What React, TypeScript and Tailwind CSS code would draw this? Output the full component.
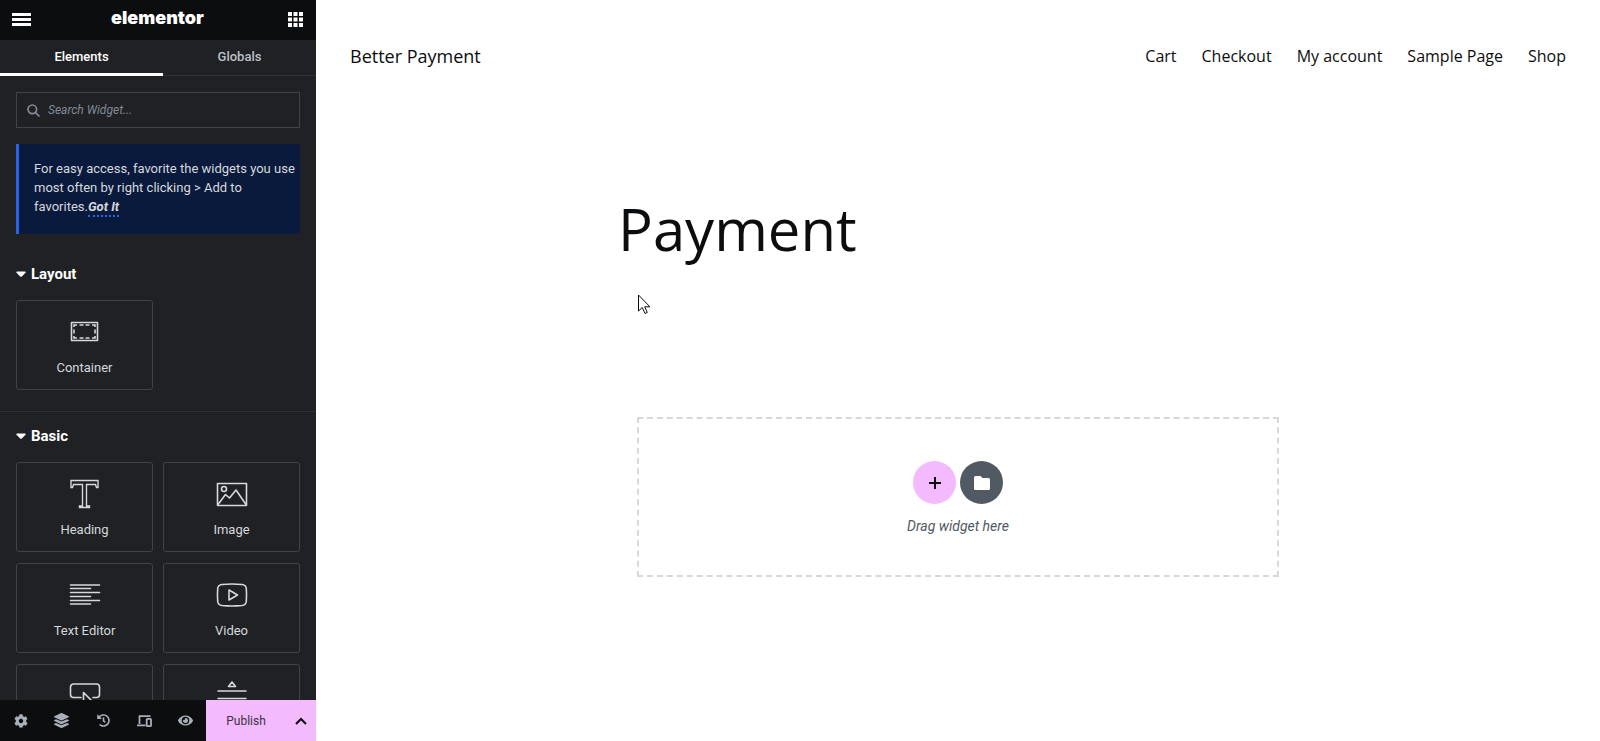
import type { ReactNode } from "react";
import { FaCog, FaEye, FaHistory, FaLayerGroup } from "react-icons/fa";

function Stroke({ children, w = 30, h = 30 }: { children: ReactNode; w?: number; h?: number }) {
  return (
    <svg
      width={w}
      height={h}
      viewBox={`0 0 ${w} ${h}`}
      fill="none"
      stroke="currentColor"
      strokeWidth="1.6"
      strokeLinecap="round"
      strokeLinejoin="round"
      aria-hidden="true"
    >
      {children}
    </svg>
  );
}

const icons: Record<string, ReactNode> = {
  container: (
    <Stroke>
      <rect x="1.5" y="5.500" width="26" height="18" />
      <path
        d="M4 10V8h3M9.500 8h4M15.500 8h4M22 8h3v2M25 12.500v4M25 19v2h-3M19.500 21h-4M13.500 21h-4M7 21H4v-2M4 16.500v-4"
        strokeLinecap="butt"
        strokeLinejoin="miter"
      />
    </Stroke>
  ),
  heading: (
    <Stroke>
      <path
        d="M1 1.500h27v7h-1.500l-1-3H16.500V27h3v1.500h-10V27h3V5.500H3.500l-1 3H1z"
        strokeWidth="1.400"
        strokeLinejoin="miter"
      />
    </Stroke>
  ),
  image: (
    <Stroke w={32}>
      <rect x="1.500" y="4.500" width="29" height="22" />
      <circle cx="8" cy="10" r="2.500" />
      <path d="M2 25.500l7.500-10 4 3.500L20 11l10 14.500" />
    </Stroke>
  ),
  text: (
    <Stroke w={32}>
      <path d="M1.500 5h29M1.500 8.500h20M1.500 12.500h29M1.500 16.500h20M1.500 20.500h29M1.500 24h20" />
    </Stroke>
  ),
  video: (
    <Stroke w={32}>
      <path d="M6 4.500Q16 3.500 26 4.500Q30 5 30.300 8.500Q30.800 15 30.300 21.500Q30 25 26 25.500Q16 26.500 6 25.500Q2 25 1.700 21.500Q1.200 15 1.700 8.500Q2 5 6 4.500z" />
      <path d="M13 10v10l8.500-5z" />
    </Stroke>
  ),
  button: (
    <Stroke w={32}>
      <path d="M12 16.500H4.500a3 3 0 0 1-3-3V6a3 3 0 0 1 3-3h23a3 3 0 0 1 3 3v7.500a3 3 0 0 1-3 3H24" />
      <path d="M14.500 11.500v13l3.500-3.500 5.500-.5z" />
    </Stroke>
  ),
  divider: (
    <Stroke w={30}>
      <path d="M15 1l3.500 4.500h-7zM1 10h28M1 17.500h28M15 26.500l3.500-4h-7z" />
    </Stroke>
  ),
};

function Card({ icon, name, labelled = true }: { icon: string; name: string; labelled?: boolean }) {
  return (
    <button
      type="button"
      aria-label={name}
      className="flex h-[90px] flex-col items-center rounded-[3px] border border-[#3f444b] pt-4 text-[13px] leading-4 text-[#d5d8dc]"
    >
      <span className="mb-[13px]">{icons[icon]}</span>
      {labelled && name}
    </button>
  );
}

function SectionHeading({ title }: { title: string }) {
  return (
    <h2>
      <button type="button" className="flex h-12 items-center gap-[5px] px-4 text-[15px] font-bold text-white">
        <svg width="10" height="6" viewBox="0 0 10 6" fill="currentColor" aria-hidden="true">
          <path d="M1 .5h8q1 .5.500 1.200L5.800 5.500q-.8.600-1.600 0L.5 1.700Q0 1 1 .5z" />
        </svg>
        {title}
      </button>
    </h2>
  );
}

function FooterButton({ label, children }: { label: string; children: ReactNode }) {
  return (
    <button type="button" aria-label={label} className="flex flex-1 items-center justify-center text-[#a9afb8]">
      {children}
    </button>
  );
}

function Panel() {
  return (
    <aside className="relative flex w-[316px] shrink-0 flex-col bg-[#1f2124] font-[Roboto,sans-serif]">
      <header className="flex h-10 shrink-0 items-center justify-between bg-[#0c0d0e] pr-[13px] pb-[2px] pl-3 text-white">
        <button type="button" aria-label="Menu">
          <svg width="19" height="13" viewBox="0 0 19 13" fill="currentColor" aria-hidden="true">
            <path d="M0 0h19v3H0zM0 5h19v3H0zM0 10h19v3H0z" />
          </svg>
        </button>
        <h1 className="pr-1 pb-[2px] font-[Inter,sans-serif] text-lg leading-5 font-black">elementor</h1>
        <button type="button" aria-label="Widgets panel">
          <svg width="15" height="15" viewBox="0 0 15 15" fill="currentColor" aria-hidden="true">
            <path d="M0 0h4v4H0zM5.500 0h4v4h-4zM11 0h4v4h-4zM0 5.500h4v4H0zM5.500 5.500h4v4h-4zM11 5.500h4v4h-4zM0 11h4v4H0zM5.500 11h4v4h-4zM11 11h4v4h-4z" />
          </svg>
        </button>
      </header>

      <nav className="flex h-9 shrink-0 text-[13px] font-medium">
        <button type="button" className="w-[163px] border-b-3 border-white text-white">
          Elements
        </button>
        <button type="button" className="flex-1 border-b border-[#2f3237] pb-[2px] text-[#bcc0c6]">
          Globals
        </button>
      </nav>

      <div className="min-h-0 flex-1 overflow-hidden">
        <label className="mx-4 mt-4 flex h-9 items-center gap-2 border border-[#3f444b] px-[10px] text-[#818a96]">
          <svg width="13" height="13" viewBox="0 0 13 13" fill="none" stroke="currentColor" strokeWidth="1.700" strokeLinecap="round" aria-hidden="true">
            <circle cx="5.300" cy="5.300" r="4.300" />
            <path d="M8.600 8.600L12 12" />
          </svg>
          <input
            type="search"
            aria-label="Search Widget"
            placeholder="Search Widget..."
            className="min-w-0 flex-1 bg-transparent text-xs italic outline-none placeholder:text-[#818a96]"
          />
        </label>

        <div className="mx-4 mt-4 h-[90px] rounded-r-[3px] border-l-3 border-[#2563eb] bg-[#0a1a3d] pt-[15px] pr-1 pl-[15px] text-[13px] leading-[19px] text-[#d5d8dc]">
          For easy access, favorite the widgets you use most often by right clicking &gt; Add to favorites.
          <a href="#got-it" className="border-b-2 border-dotted border-[#2563eb] pb-px font-bold italic">
            Got It
          </a>
        </div>

        <section className="mt-4 border-b border-[#2d3035] pb-[21px]">
          <SectionHeading title="Layout" />
          <div className="grid grid-cols-2 gap-x-[10px] gap-y-[11px] px-4 pt-[2px]">
            <Card icon="container" name="Container" />
          </div>
        </section>

        <section>
          <SectionHeading title="Basic" />
          <div className="grid grid-cols-2 gap-x-[10px] gap-y-[11px] px-4 pt-[2px]">
            <Card icon="heading" name="Heading" />
            <Card icon="image" name="Image" />
            <Card icon="text" name="Text Editor" />
            <Card icon="video" name="Video" />
            <Card icon="button" name="Button" labelled={false} />
            <Card icon="divider" name="Divider" labelled={false} />
          </div>
        </section>
      </div>

      <footer className="flex h-[41px] shrink-0 bg-[#0c0d0e]">
        <FooterButton label="Settings"><FaCog size={14} /></FooterButton>
        <FooterButton label="Structure"><FaLayerGroup size={15} /></FooterButton>
        <FooterButton label="History"><FaHistory size={13} /></FooterButton>
        <FooterButton label="Responsive mode">
          <svg width="15" height="12" viewBox="0 0 15 12" fill="none" stroke="currentColor" strokeWidth="1.800" aria-hidden="true">
            <path d="M2.500 9V1.200H13.500M0 10.300h8.500" />
            <rect x="9.700" y="3.900" width="4.300" height="7.200" rx=".7" />
          </svg>
        </FooterButton>
        <FooterButton label="Preview"><FaEye size={15} /></FooterButton>
        <button type="button" className="w-20 bg-[#f3bafd] text-xs text-[#3b3340]">Publish</button>
        <button type="button" aria-label="Save options" className="flex w-[30px] items-center justify-center bg-[#f3bafd] text-[#0c0d0e]">
          <svg width="12" height="8" viewBox="0 0 12 8" fill="none" stroke="currentColor" strokeWidth="2" aria-hidden="true">
            <path d="M1 7l5-5 5 5" />
          </svg>
        </button>
      </footer>

      <button
        type="button"
        aria-label="Collapse panel"
        className="absolute top-[343px] left-full flex h-[53px] w-4 items-center justify-center bg-[#1f2124] text-[#e6e8ea]"
      >
        <svg width="6" height="8" viewBox="0 0 6 8" fill="none" stroke="currentColor" strokeWidth="1.700" aria-hidden="true">
          <path d="M5 .5L1.500 4 5 7.500" />
        </svg>
      </button>
    </aside>
  );
}

const links = ["Cart", "Checkout", "My account", "Sample Page", "Shop"];

function Canvas() {
  return (
    <main className="relative min-w-0 flex-1 overflow-hidden bg-white font-['Open_Sans',sans-serif] text-[#0c0d0e]">
      <header className="flex items-center justify-between px-[34px] pt-11">
        <a href="#home" className="text-lg leading-6">Better Payment</a>
        <nav className="flex gap-[25px] text-base leading-6">
          {links.map((link) => (
            <a key={link} href="#page">{link}</a>
          ))}
        </nav>
      </header>

      <article className="mx-auto mt-[119px] max-w-[680px]">
        <h1 className="text-[58px] leading-[84px]">Payment</h1>
        <div className="mx-[19px] mt-[146px] flex h-[160px] flex-col items-center border-2 border-dashed border-[#d5d8dc] pt-[42px]">
          <div className="flex gap-1">
            <button type="button" aria-label="Add new container" className="flex size-[43px] items-center justify-center rounded-full bg-[#f3bafd]">
              <svg width="12" height="12" viewBox="0 0 12 12" stroke="currentColor" strokeWidth="2" aria-hidden="true">
                <path d="M6 0v12M0 6h12" />
              </svg>
            </button>
            <button type="button" aria-label="Add template" className="flex size-[43px] items-center justify-center rounded-full bg-[#515962] text-white">
              <svg width="16" height="14" viewBox="0 0 16 14" fill="currentColor" aria-hidden="true">
                <path d="M1.500 0h5l2 2h6Q16 2 16 3.500v9Q16 14 14.500 14h-13Q0 14 0 12.500v-11Q0 0 1.500 0z" />
              </svg>
            </button>
          </div>
          <p className="mt-3 font-[Roboto,sans-serif] text-sm leading-5 text-[#515962] italic">Drag widget here</p>
        </div>
      </article>

      <svg className="absolute top-[294px] left-[322px]" width="13" height="21" viewBox="0 0 13 21" fill="#fff" stroke="#0c0d0e" aria-hidden="true">
        <path d="M.5 1v16l3.700-3.500L7 19.500l2.300-1-2.600-5.700h5.200z" />
      </svg>
    </main>
  );
}

export default function App() {
  return (
    <div className="flex h-screen overflow-hidden">
      <Panel />
      <Canvas />
    </div>
  );
}
